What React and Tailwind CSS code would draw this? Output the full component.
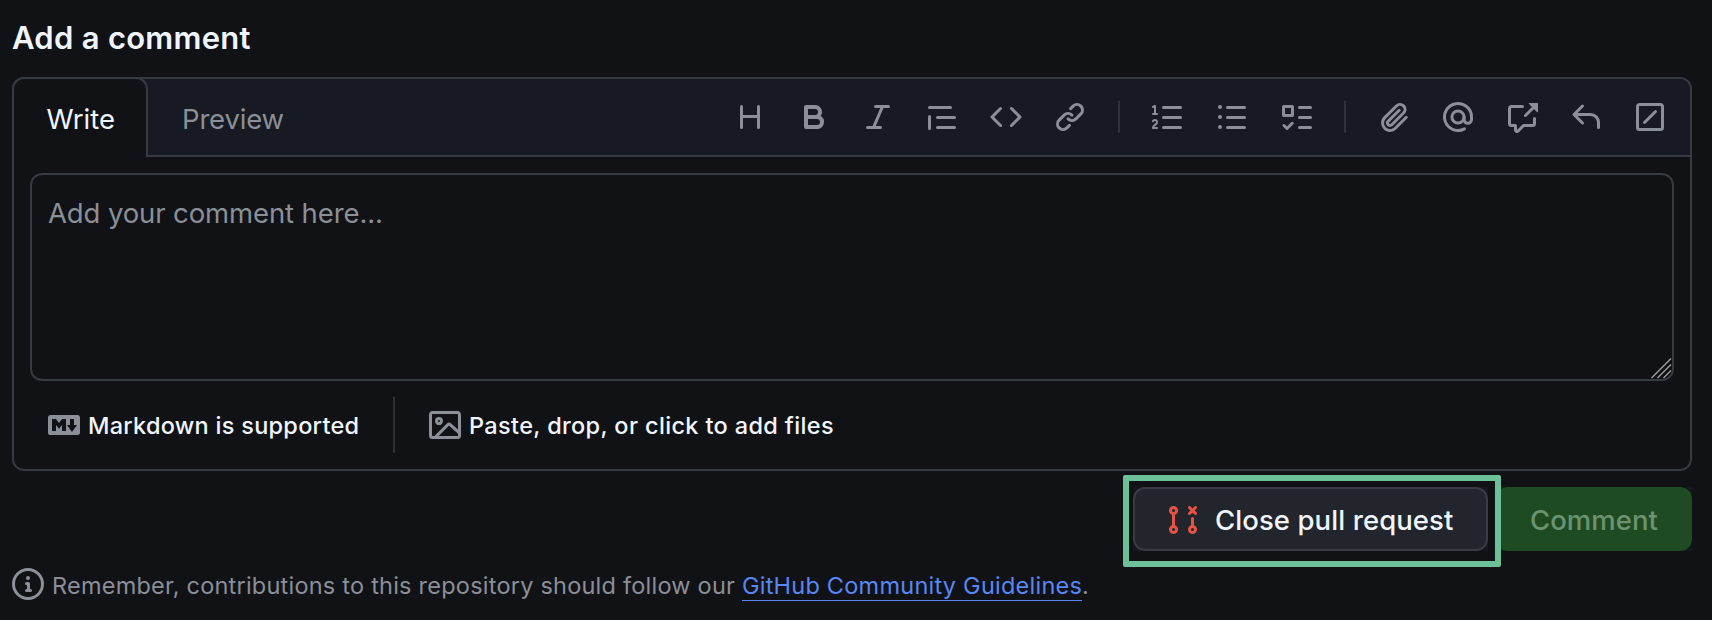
import React from "react";

const PATHS = {
  heading:
    "M3.75 2a.75.75 0 0 1 .75.75V7h7V2.75a.75.75 0 0 1 1.5 0v10.5a.75.75 0 0 1-1.5 0V8.5h-7v4.75a.75.75 0 0 1-1.5 0V2.75A.75.75 0 0 1 3.75 2Z",
  bold: "M4 2h4.5a3.501 3.501 0 0 1 2.852 5.53A3.499 3.499 0 0 1 9.5 14H4a1 1 0 0 1-1-1V3a1 1 0 0 1 1-1Zm1 7v3h4.5a1.5 1.5 0 0 0 0-3Zm3.5-2a1.5 1.5 0 0 0 0-3H5v3Z",
  italic:
    "M6 2.75A.75.75 0 0 1 6.75 2h6.5a.75.75 0 0 1 0 1.5h-2.505l-3.858 9H9.25a.75.75 0 0 1 0 1.5h-6.5a.75.75 0 0 1 0-1.5h2.505l3.858-9H6.75A.75.75 0 0 1 6 2.75Z",
  quote:
    "M1.75 2.5h10.5a.75.75 0 0 1 0 1.5H1.75a.75.75 0 0 1 0-1.5Zm4 5h8.5a.75.75 0 0 1 0 1.5h-8.5a.75.75 0 0 1 0-1.5Zm0 5h8.5a.75.75 0 0 1 0 1.5h-8.5a.75.75 0 0 1 0-1.5ZM2.5 7.75v6a.75.75 0 0 1-1.5 0v-6a.75.75 0 0 1 1.5 0Z",
  code: "m11.28 3.22 4.25 4.25a.75.75 0 0 1 0 1.06l-4.25 4.25a.749.749 0 0 1-1.275-.326.749.749 0 0 1 .215-.734L13.94 8l-3.72-3.72a.749.749 0 0 1 .326-1.275.749.749 0 0 1 .734.215Zm-6.56 0a.751.751 0 0 1 1.042.018.751.751 0 0 1 .018 1.042L2.06 8l3.72 3.72a.749.749 0 0 1-.326 1.275.749.749 0 0 1-.734-.215L.47 8.53a.75.75 0 0 1 0-1.06Z",
  link: "m7.775 3.275 1.25-1.25a3.5 3.5 0 1 1 4.95 4.95l-2.5 2.5a3.5 3.5 0 0 1-4.95 0 .751.751 0 0 1 .018-1.042.751.751 0 0 1 1.042-.018 1.998 1.998 0 0 0 2.83 0l2.5-2.5a2.002 2.002 0 0 0-2.83-2.83l-1.25 1.25a.751.751 0 0 1-1.042-.018.751.751 0 0 1-.018-1.042Zm-4.69 9.64a1.998 1.998 0 0 0 2.83 0l1.25-1.25a.751.751 0 0 1 1.042.018.751.751 0 0 1 .018 1.042l-1.25 1.25a3.5 3.5 0 1 1-4.95-4.95l2.5-2.5a3.5 3.5 0 0 1 4.95 0 .751.751 0 0 1-.018 1.042.751.751 0 0 1-1.042.018 1.998 1.998 0 0 0-2.83 0l-2.5 2.5a1.998 1.998 0 0 0 0 2.83Z",
  ordered:
    "M5 3.25a.75.75 0 0 1 .75-.75h8.5a.75.75 0 0 1 0 1.5h-8.5A.75.75 0 0 1 5 3.25Zm0 5a.75.75 0 0 1 .75-.75h8.5a.75.75 0 0 1 0 1.5h-8.5A.75.75 0 0 1 5 8.25Zm0 5a.75.75 0 0 1 .75-.75h8.5a.75.75 0 0 1 0 1.5h-8.5a.75.75 0 0 1-.75-.75ZM.924 10.32a.5.5 0 0 1-.851-.525l.001-.001.001-.002.002-.004.007-.011c.097-.144.215-.273.348-.384.228-.19.588-.392 1.068-.392.468 0 .858.181 1.126.484.259.294.377.673.377 1.038 0 .987-.686 1.495-1.156 1.845l-.047.035c-.303.225-.522.4-.654.597h1.357a.5.5 0 0 1 0 1H.5a.5.5 0 0 1-.5-.5c0-1.005.692-1.52 1.167-1.875l.035-.025c.531-.396.8-.625.8-1.078a.57.57 0 0 0-.128-.376C1.806 10.068 1.695 10 1.5 10a.658.658 0 0 0-.429.163.835.835 0 0 0-.144.153ZM2.003 2.5V6h.503a.5.5 0 0 1 0 1H.5a.5.5 0 0 1 0-1h.503V3.308l-.28.14a.5.5 0 0 1-.446-.895l1.003-.5a.5.5 0 0 1 .723.447Z",
  unordered:
    "M5.75 2.5h8.5a.75.75 0 0 1 0 1.5h-8.5a.75.75 0 0 1 0-1.5Zm0 5h8.5a.75.75 0 0 1 0 1.5h-8.5a.75.75 0 0 1 0-1.5Zm0 5h8.5a.75.75 0 0 1 0 1.5h-8.5a.75.75 0 0 1 0-1.5ZM2 14a1 1 0 1 1 0-2 1 1 0 0 1 0 2Zm1-6a1 1 0 1 1-2 0 1 1 0 0 1 2 0ZM2 4a1 1 0 1 1 0-2 1 1 0 0 1 0 2Z",
  tasklist:
    "M2 2h4a1 1 0 0 1 1 1v4a1 1 0 0 1-1 1H2a1 1 0 0 1-1-1V3a1 1 0 0 1 1-1Zm4.655 8.595a.75.75 0 0 1 0 1.06L4.03 14.28a.75.75 0 0 1-1.06 0l-1.5-1.5a.749.749 0 0 1 .326-1.275.749.749 0 0 1 .734.215l.97.97 2.095-2.095a.75.75 0 0 1 1.06 0ZM9.75 2.5h5.5a.75.75 0 0 1 0 1.5h-5.5a.75.75 0 0 1 0-1.5Zm0 5h5.5a.75.75 0 0 1 0 1.5h-5.5a.75.75 0 0 1 0-1.5Zm0 5h5.5a.75.75 0 0 1 0 1.5h-5.5a.75.75 0 0 1 0-1.5Zm-7.25-9v3h3v-3Z",
  paperclip:
    "M12.212 3.02a1.753 1.753 0 0 0-2.478.003l-5.83 5.83a3.007 3.007 0 0 0-.88 2.127c0 .795.315 1.551.88 2.116.567.567 1.333.89 2.126.89.79 0 1.548-.321 2.116-.89l5.48-5.48a.75.75 0 0 1 1.061 1.06l-5.48 5.48a4.492 4.492 0 0 1-3.177 1.33c-1.2 0-2.345-.487-3.187-1.33a4.483 4.483 0 0 1-1.32-3.177c0-1.195.475-2.341 1.32-3.186l5.83-5.83a3.25 3.25 0 0 1 5.553 2.297c0 .863-.343 1.691-.953 2.301L7.439 12.39c-.375.377-.884.59-1.416.593a1.998 1.998 0 0 1-1.412-.593 1.992 1.992 0 0 1 0-2.828l5.48-5.48a.751.751 0 0 1 1.042.018.751.751 0 0 1 .018 1.042l-5.48 5.48a.492.492 0 0 0 0 .707.499.499 0 0 0 .352.154.51.51 0 0 0 .356-.154l5.833-5.827a1.755 1.755 0 0 0 0-2.481Z",
  crossReference:
    "M2.75 3.5a.25.25 0 0 0-.25.25v7.5c0 .138.112.25.25.25h2a.75.75 0 0 1 .75.75v2.19l2.72-2.72a.749.749 0 0 1 .53-.22h4.5a.25.25 0 0 0 .25-.25v-2.5a.75.75 0 0 1 1.5 0v2.5A1.75 1.75 0 0 1 13.25 13H9.06l-2.573 2.573A1.458 1.458 0 0 1 4 14.543V13H2.75A1.75 1.75 0 0 1 1 11.25v-7.5C1 2.784 1.784 2 2.75 2h5.5a.75.75 0 0 1 0 1.5ZM16 1.25v4.146a.25.25 0 0 1-.427.177L14.03 4.03l-3.75 3.75a.749.749 0 0 1-1.275-.326.749.749 0 0 1 .215-.734l3.75-3.75-1.543-1.543A.25.25 0 0 1 11.604 1h4.146a.25.25 0 0 1 .25.25Z",
  reply:
    "M6.78 1.97a.75.75 0 0 1 0 1.06L3.81 6h6.44A4.75 4.75 0 0 1 15 10.75v2.5a.75.75 0 0 1-1.5 0v-2.5a3.25 3.25 0 0 0-3.25-3.25H3.81l2.97 2.97a.749.749 0 0 1-.326 1.275.749.749 0 0 1-.734-.215L1.47 7.28a.75.75 0 0 1 0-1.06l4.25-4.25a.75.75 0 0 1 1.06 0Z",
  slash:
    "M13.25 1c.966 0 1.75.784 1.75 1.75v10.5A1.75 1.75 0 0 1 13.25 15H2.75A1.75 1.75 0 0 1 1 13.25V2.75C1 1.784 1.784 1 2.75 1ZM2.75 2.5a.25.25 0 0 0-.25.25v10.5c0 .138.112.25.25.25h10.5a.25.25 0 0 0 .25-.25V2.75a.25.25 0 0 0-.25-.25Zm8.53 2.22a.75.75 0 0 1 0 1.06l-5.5 5.5a.75.75 0 0 1-1.06-1.06l5.5-5.5a.75.75 0 0 1 1.06 0Z",
  markdown:
    "M14.85 3c.63 0 1.15.52 1.14 1.15v7.7c0 .63-.51 1.15-1.15 1.15H1.15C.52 13 0 12.48 0 11.84V4.15C0 3.52.52 3 1.15 3ZM9 11V5H7L5.5 7 4 5H2v6h2V8l1.5 1.92L7 8v3Zm2.99.5L14.5 8H13V5h-2v3H9.5Z",
  image:
    "M16 13.25A1.75 1.75 0 0 1 14.25 15H1.75A1.75 1.75 0 0 1 0 13.25V2.75C0 1.784.784 1 1.75 1h12.5c.966 0 1.75.784 1.75 1.75ZM1.75 2.5a.25.25 0 0 0-.25.25v10.5c0 .138.112.25.25.25h.94l.03-.03 6.077-6.078a1.75 1.75 0 0 1 2.412-.06L14.5 10.31V2.75a.25.25 0 0 0-.25-.25Zm12.5 11a.25.25 0 0 0 .25-.25v-.917l-4.298-3.889a.25.25 0 0 0-.344.009L4.81 13.5ZM7 6a2 2 0 1 1-3.999.001A2 2 0 0 1 7 6ZM5.5 6a.5.5 0 1 0-1 0 .5.5 0 0 0 1 0Z",
  pullRequestClosed:
    "M3.25 1A2.25 2.25 0 0 1 4 5.372v5.256a2.251 2.251 0 1 1-1.5 0V5.372A2.251 2.251 0 0 1 3.25 1Zm9.5 5.5a.75.75 0 0 1 .75.75v3.378a2.251 2.251 0 1 1-1.5 0V7.25a.75.75 0 0 1 .75-.75Zm-2.03-5.273a.75.75 0 0 1 1.06 0l.97.97.97-.97a.748.748 0 0 1 1.265.332.75.75 0 0 1-.205.729l-.97.97.97.97a.751.751 0 0 1-.018 1.042.751.751 0 0 1-1.042.018l-.97-.97-.97.97a.749.749 0 0 1-1.275-.326.749.749 0 0 1 .215-.734l.97-.97-.97-.97a.75.75 0 0 1 0-1.06ZM2.5 3.25a.75.75 0 1 0 1.5 0 .75.75 0 0 0-1.5 0ZM3.25 12a.75.75 0 1 0 0 1.5.75.75 0 0 0 0-1.5Zm9.5 0a.75.75 0 1 0 0 1.5.75.75 0 0 0 0-1.5Z",
  info: "M0 8a8 8 0 1 1 16 0A8 8 0 0 1 0 8Zm8-6.5a6.5 6.5 0 1 0 0 13 6.5 6.5 0 0 0 0-13ZM6.5 7.75A.75.75 0 0 1 7.25 7h1a.75.75 0 0 1 .75.75v2.75h.25a.75.75 0 0 1 0 1.5h-2a.75.75 0 0 1 0-1.5h.25v-2h-.25a.75.75 0 0 1-.75-.75ZM8 6a1 1 0 1 1 0-2 1 1 0 0 1 0 2Z",
};

function Icon({ name }) {
  return (
    <svg viewBox="0 0 16 16" className="size-8 shrink-0 fill-current" aria-hidden="true">
      <path d={PATHS[name]} />
    </svg>
  );
}

function MentionIcon() {
  return (
    <svg
      viewBox="0 0 16 16"
      className="size-8 shrink-0 fill-none stroke-current stroke-[1.5]"
      strokeLinecap="round"
      aria-hidden="true"
    >
      <circle cx="8" cy="8" r="3.05" />
      <path d="M11.2 13.95A6.75 6.75 0 1 1 14.75 8v1.3a1.85 1.85 0 0 1-3.7 0V8" />
    </svg>
  );
}

const Divider = () => <div className="h-8 w-0.5 bg-[#2e3139]" />;

function Toolbar() {
  return (
    <div className="ml-auto flex items-center gap-8 pr-6 text-[#8b8f98]">
      <Icon name="heading" />
      <Icon name="bold" />
      <Icon name="italic" />
      <Icon name="quote" />
      <Icon name="code" />
      <Icon name="link" />
      <Divider />
      <Icon name="ordered" />
      <Icon name="unordered" />
      <Icon name="tasklist" />
      <Divider />
      <Icon name="paperclip" />
      <MentionIcon />
      <Icon name="crossReference" />
      <Icon name="reply" />
      <Icon name="slash" />
    </div>
  );
}

export default function App() {
  return (
    <div className="flex h-[620px] w-[1712px] flex-col overflow-hidden bg-[#111216] pr-5 pl-3 font-['Inter',sans-serif] text-[#f0f5fc]">
      <h2 className="mt-[18px] mb-[19px] text-[31px] leading-10 font-semibold tracking-[0.28px]">Add a comment</h2>

      <section className="flex h-[394px] flex-col rounded-[12px] border-2 border-[#363a42]">
        <div className="flex h-[78px] shrink-0 rounded-t-[10px] bg-[#171a22] text-[27.5px] leading-10">
          <div className="-mt-0.5 -ml-0.5 flex w-[136px] rounded-t-[12px] border-2 border-b-0 border-[#363a42] bg-[#111216] pt-5 pl-[32.5px] tracking-[0.04px]">
            Write
          </div>
          <div className="flex flex-1 border-b-2 border-[#363a42]">
            <div className="pt-5 pl-[34px] tracking-[-0.184px] text-[#8b8f98]">Preview</div>
            <Toolbar />
          </div>
        </div>

        <div className="relative mx-4 mt-4 h-52 shrink-0 rounded-[12px] border-2 border-[#363a42] pt-[18px] pl-4 text-[27.5px] leading-10 tracking-[-0.113px] text-[#8b8f98]">
          Add your comment here...
          <svg
            viewBox="0 0 22 22"
            className="absolute right-0 bottom-0 size-[22px] fill-none stroke-[#a3a4a8] stroke-[1.2]"
            aria-hidden="true"
          >
            <path d="M1.5 21 21 1.5M7.5 21 21 7.5M13.5 21 21 13.5" />
          </svg>
        </div>

        <div className="mt-4 ml-[34px] flex h-14 items-center text-[23.5px] leading-8 font-medium">
          <div className="flex w-[345px] items-center">
            <span className="text-[#8b8f98]">
              <Icon name="markdown" />
            </span>
            <span className="mt-0.5 ml-2 tracking-[0.274px]">Markdown is supported</span>
          </div>
          <div className="h-14 w-0.5 bg-[#2e3139]" />
          <span className="ml-[34px] text-[#8b8f98]">
            <Icon name="image" />
          </span>
          <span className="mt-0.5 ml-2 tracking-[0.355px]">Paste, drop, or click to add files</span>
        </div>
      </section>

      <div className="mt-4 flex h-16 shrink-0 justify-end gap-2 text-[27.5px] leading-10 font-medium">
        <div className="relative w-[355px] bg-[#14171d]">
          <button className="flex h-16 w-full items-center rounded-[12px] border-2 border-[#383b43] bg-[#22252c] pl-8">
            <span className="mt-0.5 text-[#e65345]">
              <Icon name="pullRequestClosed" />
            </span>
            <span className="mt-0.5 ml-4 tracking-[0.088px] whitespace-nowrap">Close pull request</span>
          </button>
          <div className="absolute -top-3 -right-[13px] -bottom-4 -left-2.5 z-10 rounded-[2px] border-6 border-[#6cc198]" />
        </div>
        <div className="w-[196px] bg-[#14171d]">
          <button className="flex h-16 w-full items-center rounded-[12px] bg-[#1f4b22] pl-[34px] text-[#6b9371]">
            <span className="mt-0.5 tracking-[0.029px]">Comment</span>
          </button>
        </div>
      </div>

      <div className="mt-[17px] flex h-8 shrink-0 items-center text-[23.5px] leading-8 text-[#8b8f98]">
        <Icon name="info" />
        <p className="mt-[3px] ml-2 tracking-[0.228px] whitespace-pre">
          Remember, contributions to this repository should follow our{" "}
          <a className="inline-block h-[31px] border-b border-[#5987f5] tracking-[0.238px] text-[#5987f5]">
            GitHub Community Guidelines
          </a>
          .
        </p>
      </div>
    </div>
  );
}
